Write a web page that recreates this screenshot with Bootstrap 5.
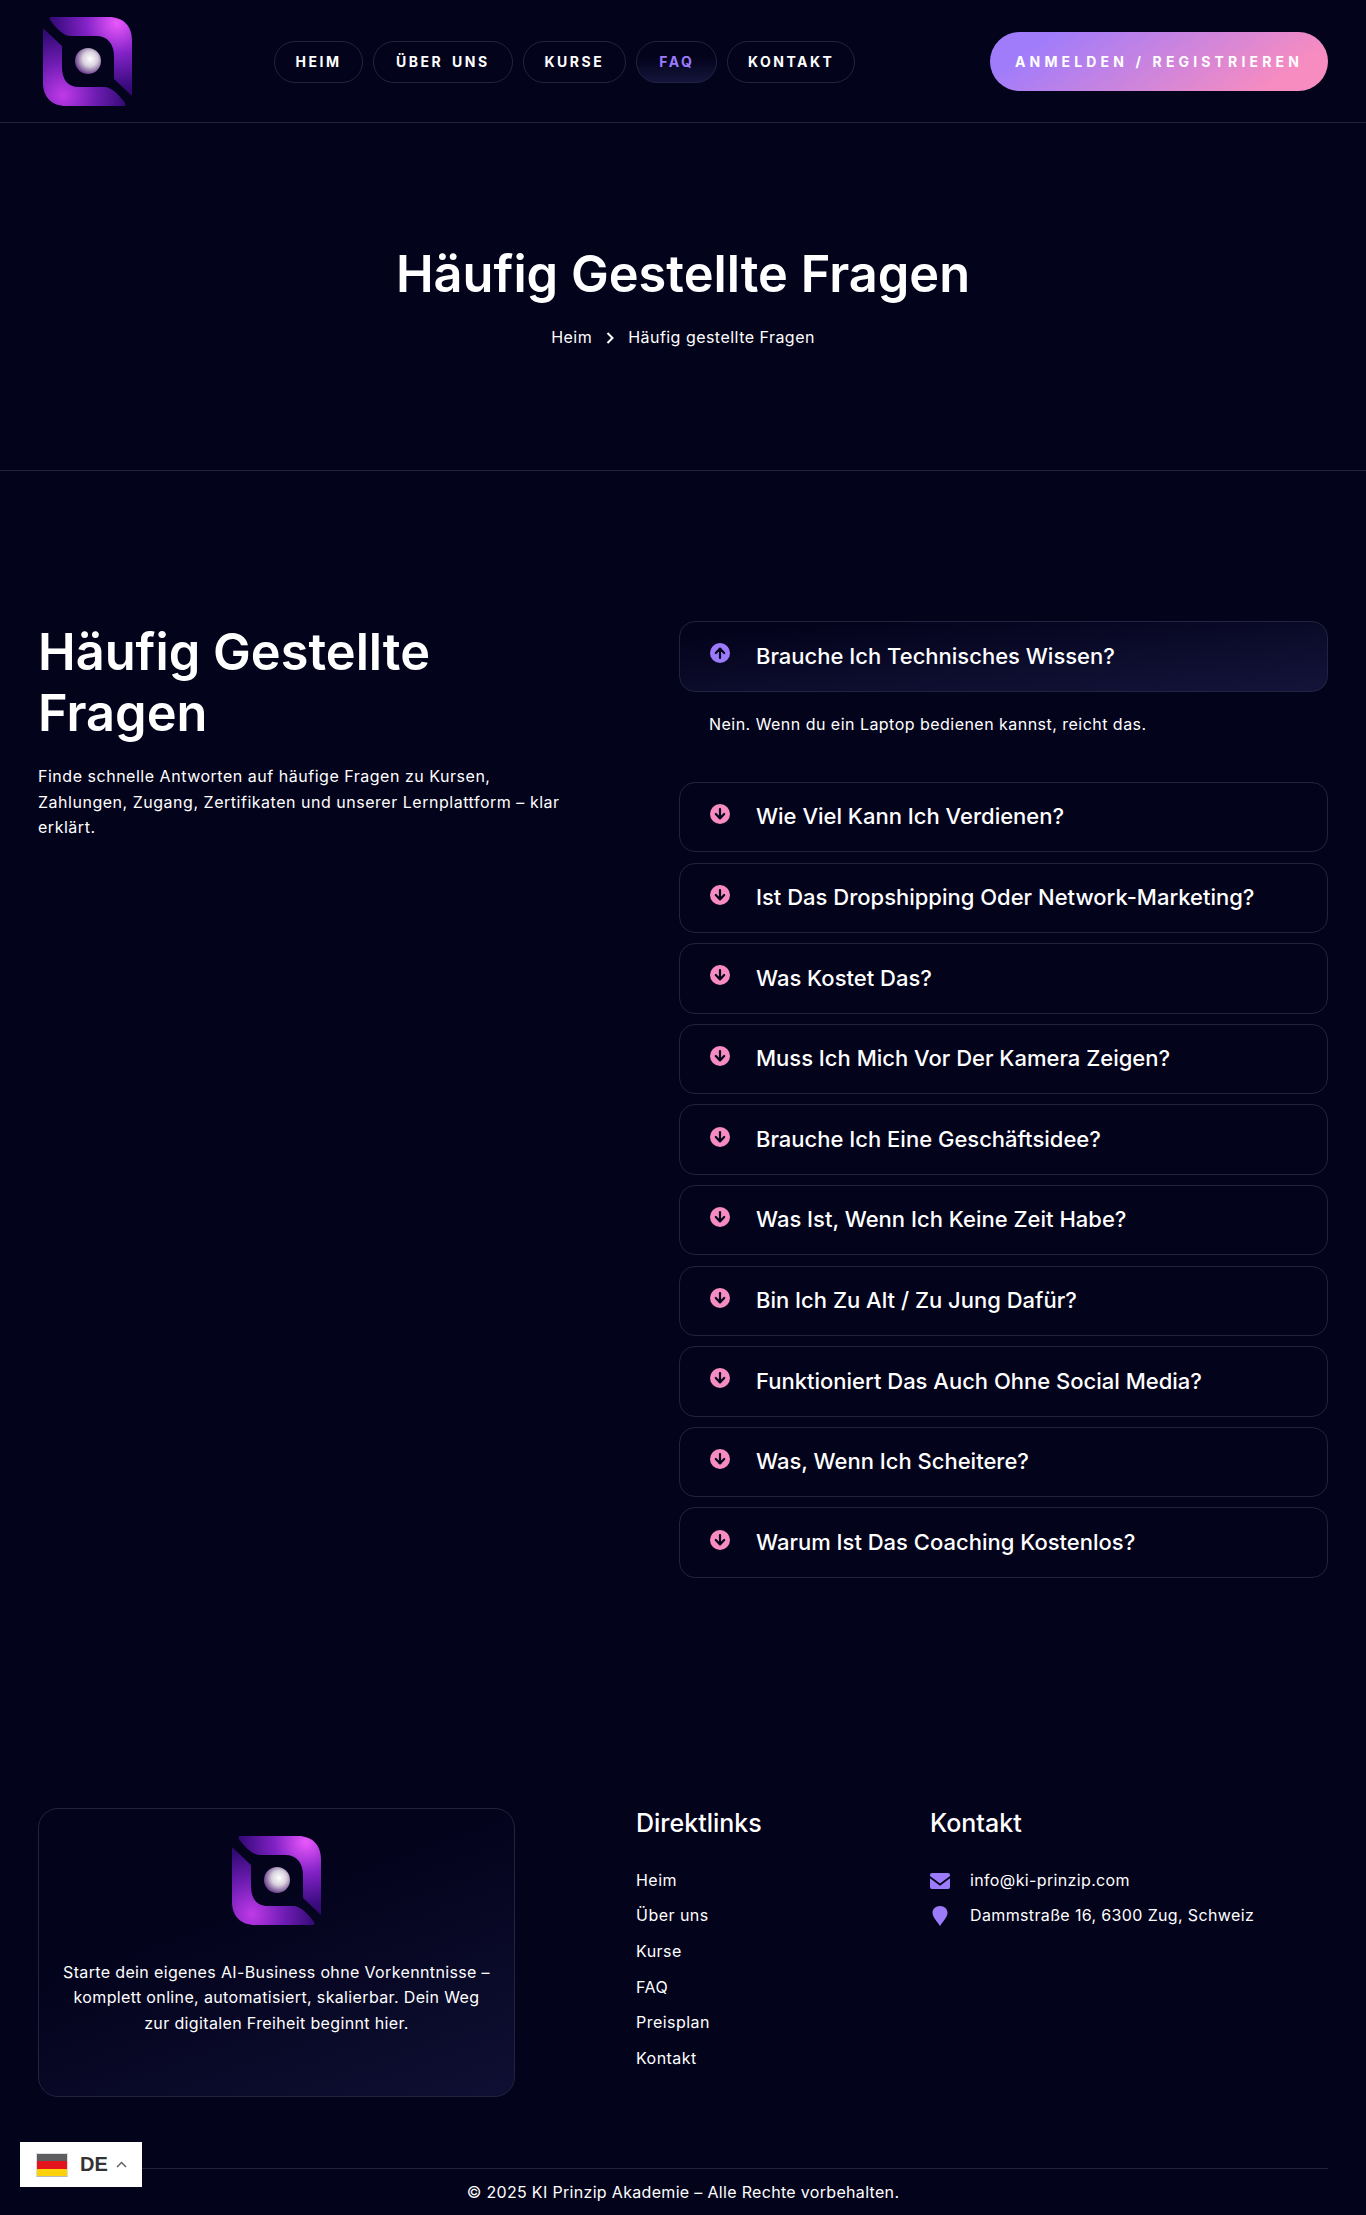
<!DOCTYPE html>
<html lang="de">
<head>
<meta charset="utf-8">
<title>Häufig Gestellte Fragen</title>
<link href="https://cdn.jsdelivr.net/npm/bootstrap@5.3.0/dist/css/bootstrap.min.css" rel="stylesheet">
<style>
:root{--page:#03031c;--line:#23233f;--violet:#9c7bfb;--pink:#f78cc0}
html,body{background:var(--page)}
body{color:#fff;font-family:Inter,"Liberation Sans",sans-serif;font-size:16px;line-height:25.5px;letter-spacing:.47px;position:relative;height:2215px;overflow-x:hidden}
a{color:inherit;text-decoration:none}
.top-bar{height:123px;padding:2px 38px 0 43px;border-bottom:1px solid var(--line)}
.logo-mark{width:90px;height:90px;display:block}
.pill-nav{gap:10px;margin-left:141px}
.pill-link{display:block;height:42px;line-height:40px;padding:0 20.5px;border:1px solid var(--line);border-radius:21px;color:#fff;font-size:14px;font-weight:700;letter-spacing:2.5px;word-spacing:3px;text-transform:uppercase}
.pill-link.is-on{color:var(--violet);background:linear-gradient(180deg,transparent 40%,#15153c 100%);padding:0 22px}
.pill-wide{padding:0 21px}
.pill-broad{padding:0 22px}
.pill-trim{padding:0 19.5px}
.cta-btn{width:338px;height:59px;line-height:59px;padding:0;margin-top:-1px;border:0;border-radius:30px;color:#fff;font-size:14px;font-weight:700;letter-spacing:4.15px;text-transform:uppercase;text-align:center;background:linear-gradient(145deg,#a07cfb 15%,#f78cc0 85%)}
.hero-band{height:348px;border-bottom:1px solid var(--line);padding-top:120px;text-align:center}
.hero-title{font-size:50.5px;line-height:62px;font-weight:600;letter-spacing:0;margin:0 0 20px}
.crumbs{gap:14px;line-height:25px}
.faq-zone{padding:150px 38px 0;gap:0}
.faq-intro{width:641px}
.faq-title{font-size:50.5px;line-height:61px;font-weight:600;letter-spacing:0;margin:0 0 21px}
.faq-intro p{max-width:532px;letter-spacing:.52px}
.faq-list{width:649px;gap:10.1px}
.faq-row{height:70.5px;border:1px solid var(--line);border-radius:16px;padding:0 30px;gap:26px;font-size:22px;font-weight:500;letter-spacing:0}
.faq-row.is-open{background:linear-gradient(175deg,transparent 10%,#14143a 100%)}
.faq-row svg{width:20px;height:20px;flex:none;margin-top:-6px}
.faq-answer{height:80.4px;padding:20.500px 0 0 30px;margin:0}
.foot-zone{padding:0 38px;margin-top:230px}
.foot-card{width:477px;height:289px;border:1px solid var(--line);border-radius:20px;background:linear-gradient(160deg,transparent 35%,#0f0f33 100%);padding:27px 20px 0;text-align:center}
.foot-card .logo-mark{margin:0 auto 34px}
.foot-card p{margin:0;letter-spacing:.36px}
.foot-links{margin-left:121px;width:294px}
.foot-head{font-size:25px;line-height:30px;font-weight:500;letter-spacing:0;margin:0 0 30px}
.foot-links ul{gap:10.1px}
.foot-contact svg{width:20px;flex:none}
.foot-contact ul{gap:10.1px;letter-spacing:.36px}
.foot-gap{gap:20px}
.foot-rule{margin:71px 38px 0;border-top:1px solid var(--line);padding-top:11px;text-align:center;letter-spacing:.32px}
.lang-box{position:absolute;left:20px;top:2142px;width:122px;height:45px;background:#fff;color:#333;font-family:"Liberation Sans",sans-serif;font-size:20px;font-weight:700;letter-spacing:0;padding-left:16px;gap:12px}
.lang-flag{width:32px;height:24px;border:1px solid #ddd;border-bottom-color:#bbb;background:linear-gradient(180deg,#5e5e60 0 33%,#e3141e 33% 66%,#fdd20a 66%);flex:none}
</style>
</head>
<body>
<svg width="0" height="0" class="position-absolute">
  <defs>
    <radialGradient id="swirlA" gradientUnits="userSpaceOnUse" cx="74" cy="6" r="78">
      <stop offset="0" stop-color="#ea58fc"/><stop offset=".4" stop-color="#8222c6"/><stop offset=".8" stop-color="#3c0c80"/><stop offset="1" stop-color="#2a0860"/>
    </radialGradient>
    <radialGradient id="swirlB" gradientUnits="userSpaceOnUse" cx="20" cy="78" r="78">
      <stop offset="0" stop-color="#c03ae8"/><stop offset=".4" stop-color="#721eb6"/><stop offset=".8" stop-color="#350b78"/><stop offset="1" stop-color="#250755"/>
    </radialGradient>
    <radialGradient id="orb" cx=".58" cy=".42" r=".62">
      <stop offset="0" stop-color="#fff"/><stop offset=".45" stop-color="#d9d2de"/><stop offset="1" stop-color="#5f3382"/>
    </radialGradient>
    <symbol id="brandLogo" viewBox="0 0 90 90">
      <path fill="url(#swirlA)" d="M8 0H66C80 0 89 9 89 23V79L71 62V40C71 27 65 19 53 19H28C20 19 13 11 7 3Q6 0 8 0Z"/>
      <path fill="url(#swirlB)" d="M81 89H23C9 89 0 80 0 66V11L19 29V50C19 63 25 70 36 70H61C69 70 76 78 82 86Q83 89 81 89Z"/>
      <circle cx="45" cy="44" r="13" fill="url(#orb)"/>
    </symbol>
    <symbol id="arrowUp" viewBox="0 0 20 20"><path fill="none" stroke="#03031c" stroke-width="2.2" stroke-linecap="round" stroke-linejoin="round" d="M10 15V6M5.8 10 10 5.6 14.2 10"/></symbol>
  </defs>
</svg>

<header class="top-bar d-flex align-items-center">
  <a href="#"><svg class="logo-mark"><use href="#brandLogo"/></svg></a>
  <nav class="nav pill-nav">
    <a class="pill-link" href="#">Heim</a>
    <a class="pill-link pill-broad" href="#">Über uns</a>
    <a class="pill-link pill-wide" href="#">Kurse</a>
    <a class="pill-link is-on" href="#">FAQ</a>
    <a class="pill-link pill-trim" href="#">Kontakt</a>
  </nav>
  <a class="btn cta-btn ms-auto" href="#">Anmelden / Registrieren</a>
</header>

<section class="hero-band">
  <h1 class="hero-title">Häufig Gestellte Fragen</h1>
  <div class="crumbs d-flex justify-content-center align-items-center">
    <a href="#">Heim</a>
    <svg width="8" height="12" viewBox="0 0 8 12"><path d="M1.5 1 6.5 6 1.5 11" fill="none" stroke="#fff" stroke-width="2"/></svg>
    <span>Häufig gestellte Fragen</span>
  </div>
</section>

<main class="faq-zone d-flex">
  <div class="faq-intro">
    <h2 class="faq-title">Häufig Gestellte<br>Fragen</h2>
    <p class="mb-0">Finde schnelle Antworten auf häufige Fragen zu Kursen, Zahlungen, Zugang, Zertifikaten und unserer Lernplattform – klar erklärt.</p>
  </div>
  <div class="faq-list d-flex flex-column">
    <div>
      <div class="faq-row is-open d-flex align-items-center">
        <svg viewBox="0 0 20 20"><circle cx="10" cy="10" r="10" fill="#9c7bfb"/><use href="#arrowUp"/></svg>
        <span>Brauche Ich Technisches Wissen?</span>
      </div>
      <p class="faq-answer">Nein. Wenn du ein Laptop bedienen kannst, reicht das.</p>
    </div>
    <div class="faq-row d-flex align-items-center"><svg viewBox="0 0 20 20"><circle cx="10" cy="10" r="10" fill="#f78cc0"/><use href="#arrowUp" transform="rotate(180 10 10)"/></svg><span>Wie Viel Kann Ich Verdienen?</span></div>
    <div class="faq-row d-flex align-items-center"><svg viewBox="0 0 20 20"><circle cx="10" cy="10" r="10" fill="#f78cc0"/><use href="#arrowUp" transform="rotate(180 10 10)"/></svg><span>Ist Das Dropshipping Oder Network-Marketing?</span></div>
    <div class="faq-row d-flex align-items-center"><svg viewBox="0 0 20 20"><circle cx="10" cy="10" r="10" fill="#f78cc0"/><use href="#arrowUp" transform="rotate(180 10 10)"/></svg><span>Was Kostet Das?</span></div>
    <div class="faq-row d-flex align-items-center"><svg viewBox="0 0 20 20"><circle cx="10" cy="10" r="10" fill="#f78cc0"/><use href="#arrowUp" transform="rotate(180 10 10)"/></svg><span>Muss Ich Mich Vor Der Kamera Zeigen?</span></div>
    <div class="faq-row d-flex align-items-center"><svg viewBox="0 0 20 20"><circle cx="10" cy="10" r="10" fill="#f78cc0"/><use href="#arrowUp" transform="rotate(180 10 10)"/></svg><span>Brauche Ich Eine Geschäftsidee?</span></div>
    <div class="faq-row d-flex align-items-center"><svg viewBox="0 0 20 20"><circle cx="10" cy="10" r="10" fill="#f78cc0"/><use href="#arrowUp" transform="rotate(180 10 10)"/></svg><span>Was Ist, Wenn Ich Keine Zeit Habe?</span></div>
    <div class="faq-row d-flex align-items-center"><svg viewBox="0 0 20 20"><circle cx="10" cy="10" r="10" fill="#f78cc0"/><use href="#arrowUp" transform="rotate(180 10 10)"/></svg><span>Bin Ich Zu Alt / Zu Jung Dafür?</span></div>
    <div class="faq-row d-flex align-items-center"><svg viewBox="0 0 20 20"><circle cx="10" cy="10" r="10" fill="#f78cc0"/><use href="#arrowUp" transform="rotate(180 10 10)"/></svg><span>Funktioniert Das Auch Ohne Social Media?</span></div>
    <div class="faq-row d-flex align-items-center"><svg viewBox="0 0 20 20"><circle cx="10" cy="10" r="10" fill="#f78cc0"/><use href="#arrowUp" transform="rotate(180 10 10)"/></svg><span>Was, Wenn Ich Scheitere?</span></div>
    <div class="faq-row d-flex align-items-center"><svg viewBox="0 0 20 20"><circle cx="10" cy="10" r="10" fill="#f78cc0"/><use href="#arrowUp" transform="rotate(180 10 10)"/></svg><span>Warum Ist Das Coaching Kostenlos?</span></div>
  </div>
</main>

<footer>
  <div class="foot-zone d-flex">
    <div class="foot-card">
      <svg class="logo-mark"><use href="#brandLogo"/></svg>
      <p>Starte dein eigenes AI-Business ohne Vorkenntnisse – komplett online, automatisiert, skalierbar. Dein Weg zur digitalen Freiheit beginnt hier.</p>
    </div>
    <div class="foot-links">
      <h3 class="foot-head">Direktlinks</h3>
      <ul class="list-unstyled d-flex flex-column m-0">
        <li><a href="#">Heim</a></li><li><a href="#">Über uns</a></li><li><a href="#">Kurse</a></li><li><a href="#">FAQ</a></li><li><a href="#">Preisplan</a></li><li><a href="#">Kontakt</a></li>
      </ul>
    </div>
    <div class="foot-contact">
      <h3 class="foot-head">Kontakt</h3>
      <ul class="list-unstyled d-flex flex-column m-0">
        <li class="d-flex align-items-center foot-gap"><svg height="16" viewBox="0 0 20 16"><path fill="#9c7bfb" d="M2 0H18A2 2 0 0 1 20 2V3L10 10.5 0 3V2A2 2 0 0 1 2 0ZM0 5.2 10 12.8 20 5.200V14A2 2 0 0 1 18 16H2A2 2 0 0 1 0 14Z"/></svg><span>info@ki-prinzip.com</span></li>
        <li class="d-flex align-items-center foot-gap"><svg height="20" viewBox="0 0 20 20"><path fill="#9c7bfb" d="M10 0C14.500 0 17.500 3 17.500 7 17.500 11 12.500 16 10 20 7.500 16 2.500 11 2.500 7 2.500 3 5.500 0 10 0Z"/></svg><span>Dammstraße 16, 6300 Zug, Schweiz</span></li>
      </ul>
    </div>
  </div>
  <div class="foot-rule">© 2025 KI Prinzip Akademie – Alle Rechte vorbehalten.</div>
</footer>

<div class="lang-box d-flex align-items-center">
  <span class="lang-flag"></span>
  <span class="d-flex align-items-center gap-2">DE <svg width="11" height="7" viewBox="0 0 11 7"><path d="M1 6 5.500 1.500 10 6" fill="none" stroke="#666" stroke-width="1.500"/></svg></span>
</div>
<script src="https://cdn.jsdelivr.net/npm/bootstrap@5.3.0/dist/js/bootstrap.bundle.min.js"></script>
</body>
</html>
